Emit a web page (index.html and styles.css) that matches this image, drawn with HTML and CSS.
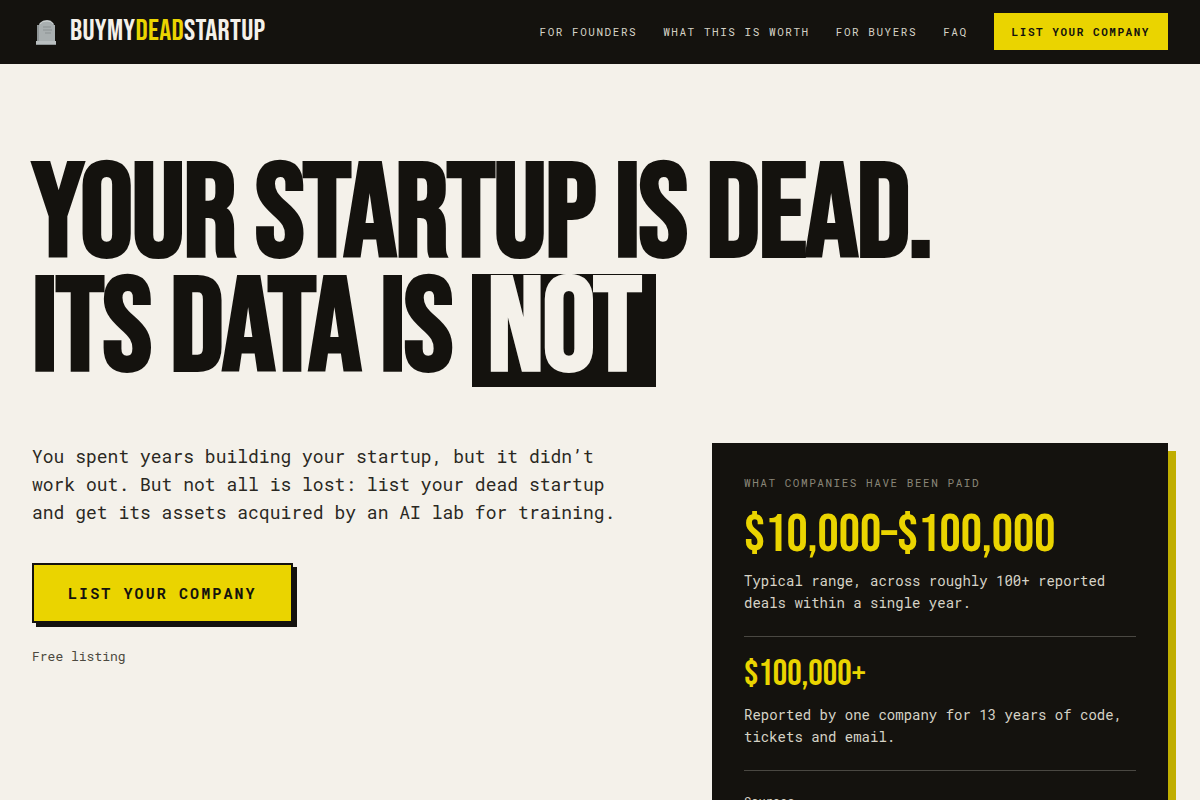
FILE: index.html
```html
<!DOCTYPE html>
<html lang="en">

<head>
    <meta charset="UTF-8">
    <meta name="viewport" content="width=device-width, initial-scale=1.0">
    <title>BuyMyDeadStartup</title>
    <link rel="stylesheet" href="styles.css">
</head>

<body>
    <header class="site-header">
        <a class="logo" href="#">
            <svg class="logo-icon" viewBox="0 0 27 28" aria-hidden="true">
                <path d="M5 24V7h2q0-2 2-3 2-2 6-2t5 2q2 1 2 3h1v17z" fill="#a9afb0" />
                <path d="M5 24V7h2v17z" fill="#8f9596" />
                <path d="M8 6q2-3 7-3t6 3" fill="none" stroke="#cfd3d3" stroke-width="1" />
                <path d="M11 9h8M11 12h9M13 15h6" stroke="#8b9192" stroke-width="1" />
                <path d="M4 23h20v4H4z" fill="#b9bebf" />
                <path d="M4 26h20v1H4z" fill="#8f9596" />
            </svg>
            <span class="logo-text">BUYMY<span class="accent">DEAD</span>STARTUP</span>
        </a>
        <nav class="site-nav">
            <a href="#founders">For founders</a>
            <a href="#worth">What this is worth</a>
            <a href="#buyers">For buyers</a>
            <a href="#faq">FAQ</a>
            <a class="nav-cta" href="#list">List your company</a>
        </nav>
    </header>

    <main class="hero">
        <h1>Your startup is dead.<br>Its data is <span class="not">not</span></h1>

        <div class="hero-grid">
            <section class="pitch">
                <p class="lead">You spent years building your startup, but it didn’t work out. But not all is lost: list your dead startup and get its assets acquired by an AI lab for training.</p>
                <a class="cta" href="#list">List your company</a>
                <p class="note">Free listing</p>
            </section>

            <aside class="card">
                <h2>What companies have been paid</h2>
                <p class="amount">$10,000–$100,000</p>
                <p class="detail">Typical range, across roughly 100+ reported deals within a single year.</p>
                <hr>
                <p class="amount small">$100,000+</p>
                <p class="detail">Reported by one company for 13 years of code, tickets and email.</p>
                <hr>
                <p class="sources">Sources</p>
            </aside>
        </div>
    </main>
</body>

</html>
```

FILE: styles.css
```css
* {
    box-sizing: border-box;
}

body {
    margin: 0;
    background: #f4f1ea;
    color: #14120e;
    font-family: "Roboto Mono", "Liberation Mono", monospace;
}

h1,
h2,
p {
    margin: 0;
}

a {
    color: inherit;
    text-decoration: none;
}

h1,
.logo-text,
.amount {
    font-family: "Bebas Neue", "Liberation Sans Narrow", "Liberation Sans", sans-serif;
}

.site-header {
    display: flex;
    align-items: center;
    justify-content: space-between;
    min-height: 64px;
    padding: 0 32px;
    background: #14120e;
    color: #f4f1ea;
}

.logo {
    display: flex;
    align-items: center;
    gap: 11px;
}

.logo-icon {
    width: 27px;
    height: 28px;
}

.logo-text {
    font-size: 30px;
    line-height: 36px;
    letter-spacing: 0.01em;
    padding-bottom: 2px;
}

.accent {
    color: #ead400;
}

.site-nav {
    display: flex;
    align-items: center;
    gap: 26px;
    padding-bottom: 1px;
    font-size: 11px;
    line-height: 17px;
    letter-spacing: 0.14em;
    text-transform: uppercase;
    white-space: nowrap;
    color: #d6d2c6;
}

.nav-cta {
    padding: 10px 18px;
    background: #ead400;
    color: #14120e;
    font-weight: bold;
}

.hero {
    padding: 96px 32px 64px;
}

h1 {
    font-size: 132px;
    line-height: 0.86;
    letter-spacing: -0.01em;
    text-transform: uppercase;
}

.not {
    display: inline-block;
    padding: 0 16px;
    background: #14120e;
    color: #f4f1ea;
}

.hero-grid {
    display: grid;
    grid-template-columns: 4fr 3fr;
    gap: 72px;
    margin-top: 56px;
    align-items: start;
}

.lead {
    font-size: 18px;
    line-height: 1.55;
    color: #2a2822;
}

.cta {
    display: inline-block;
    margin-top: 36px;
    padding: 17px 34px;
    border: 2px solid #14120e;
    background: #ead400;
    box-shadow: 4px 4px 0 #14120e;
    font-size: 15px;
    line-height: 22px;
    font-weight: bold;
    letter-spacing: 0.14em;
    text-transform: uppercase;
}

.note {
    margin-top: 23px;
    font-size: 13px;
    line-height: 20px;
    color: #4c4940;
}

.card {
    padding: 32px;
    background: #14120e;
    color: #d6d2c6;
    box-shadow: 8px 8px 0 #c0ae00;
}

.card h2 {
    font-size: 11px;
    line-height: 16px;
    font-weight: normal;
    letter-spacing: 0.14em;
    text-transform: uppercase;
    color: #8a8678;
}

.amount {
    margin-top: 18px;
    font-size: 53px;
    line-height: 52px;
    color: #ead400;
}

.amount.small {
    margin-top: 0;
    font-size: 36px;
    line-height: 36px;
}

.detail {
    margin-top: 9px;
    font-size: 14px;
    line-height: 22px;
}

.small + .detail {
    margin-top: 11px;
}

.card hr {
    margin: 22px 0 20px;
    border: 0;
    border-top: 1px solid #4a4842;
}

.sources {
    font-size: 12px;
    line-height: 20px;
}
```
